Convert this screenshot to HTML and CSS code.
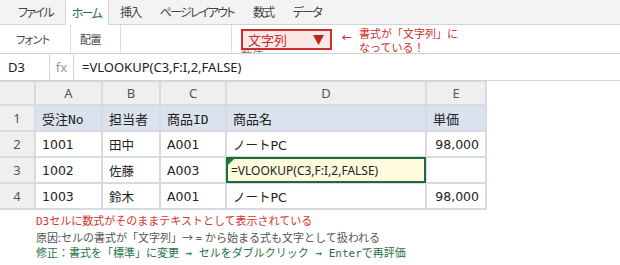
FILE: index.html
```html
<!DOCTYPE html>
<html lang="ja">
<head>
<meta charset="utf-8">
<link rel="stylesheet" href="styles.css">
</head>
<body>
<div class="tabs">
  <span class="tab">ファイル</span>
  <span class="tab active">ホーム</span>
  <span class="tab">挿入</span>
  <span class="tab">ページレイアウト</span>
  <span class="tab">数式</span>
  <span class="tab">データ</span>
</div>
<div class="ribbon">
  <div class="group g1">フォント</div>
  <div class="group g2">配置</div>
  <div class="group g3"></div>
  <div class="fmt">
    <div class="dropdown"><span>文字列</span><svg class="caret" width="11" height="10" viewBox="0 0 11 10"><polygon points="0,0 11,0 5.5,10" fill="#b8281c"/></svg></div>
    <div class="fmt-label">数値</div>
  </div>
  <div class="arrow">←</div>
  <div class="note">書式が「文字列」に<br>なっている！</div>
</div>
<div class="fbar">
  <div class="name">D3</div>
  <div class="fx">fx</div>
  <div class="formula">=VLOOKUP(C3,F:I,2,FALSE)</div>
</div>
<div class="sheet">
  <div class="ch"></div><div class="ch">A</div><div class="ch">B</div><div class="ch">C</div><div class="ch">D</div><div class="ch">E</div>
  <div class="rh">1</div><div class="hd">受注No</div><div class="hd">担当者</div><div class="hd">商品ID</div><div class="hd">商品名</div><div class="hd">単価</div>
  <div class="rh">2</div><div class="c">1001</div><div class="c">田中</div><div class="c">A001</div><div class="c">ノートPC</div><div class="c num">98,000</div>
  <div class="rh">3</div><div class="c">1002</div><div class="c">佐藤</div><div class="c">A003</div><div class="c err">=VLOOKUP(C3,F:I,2,FALSE)</div><div class="c num"></div>
  <div class="rh">4</div><div class="c">1003</div><div class="c">鈴木</div><div class="c">A001</div><div class="c">ノートPC</div><div class="c num">98,000</div>
</div>
<div class="notes">
  <div class="n1">D3セルに数式がそのままテキストとして表示されている</div>
  <div class="n2">原因:セルの書式が「文字列」→ = から始まる式も文字として扱われる</div>
  <div class="n3">修正：書式を「標準」に変更 → セルをダブルクリック → Enterで再評価</div>
</div>
</body>
</html>
```

FILE: styles.css
```css
body {
  margin: 0;
  background: #fff;
  font-family: "Noto Sans", "Noto Sans CJK JP", sans-serif;
  color: #222;
  width: 620px;
  height: 265px;
  overflow: hidden;
}

.tabs {
  display: flex;
  gap: 4px;
  height: 24px;
  padding-left: 11px;
  background: #f3f3f3;
  border-bottom: 1px solid #d2d2d2;
  font-size: 12px;
  font-feature-settings: "palt";
  letter-spacing: -1.7px;
  color: #444;
}
.tab {
  display: flex;
  align-items: center;
  padding: 0 8px 0 7px;
}
.tab.active {
  background: #fff;
  color: #1e7145;
  border-left: 1px solid #d6d6d6;
  border-right: 1px solid #d6d6d6;
  height: 25px;
  padding: 0 7px 0 6px;
}

.ribbon {
  display: flex;
  height: 28px;
  border-bottom: 1px solid #d2d2d2;
  font-size: 11px;
  color: #444;
  box-sizing: content-box;
}
.group {
  display: flex;
  align-items: center;
  border-right: 1px solid #dcdcdc;
  box-sizing: border-box;
  font-feature-settings: "palt";
  letter-spacing: -0.6px;
}
.g1 { width: 71px; padding-left: 16px; }
.g2 { width: 50px; padding-left: 9px; }
.g3 { width: 111px; }

.fmt {
  margin-left: 9px;
  width: 91px;
  height: 28px;
  overflow: hidden;
  display: flex;
  flex-direction: column;
}
.dropdown {
  flex: none;
  margin-top: 4px;
  height: 21px;
  box-sizing: border-box;
  border: 2px solid #c9302c;
  background: #fde8e8;
  color: #c9302c;
  font-size: 13px;
  display: flex;
  align-items: center;
  justify-content: space-between;
  padding: 0 6px 0 5px;
}
.caret { display: block; margin-top: 1px; }
.fmt-label {
  flex: none;
  font-size: 11px;
  line-height: 12px;
  color: #777;
  margin-top: 0;
}
.arrow {
  margin-left: 10px;
  padding-top: 5px;
  color: #c9302c;
  font-size: 12px;
  line-height: 14px;
  font-family: "DejaVu Sans", sans-serif;
}
.note {
  margin-left: 7px;
  padding-top: 1px;
  color: #c9302c;
  font-size: 11px;
  line-height: 14px;
  font-family: "Noto Sans CJK JP", sans-serif;
  white-space: nowrap;
  height: 28px;
}

.fbar {
  display: flex;
  height: 26px;
  border-bottom: 1px solid #d2d2d2;
  font-size: 13px;
  align-items: stretch;
}
.name {
  width: 50px;
  box-sizing: border-box;
  border-right: 1px solid #d6d6d6;
  padding-left: 8px;
  display: flex;
  align-items: center;
}
.fx {
  width: 24px;
  box-sizing: border-box;
  border-right: 1px solid #d6d6d6;
  color: #9a9a9a;
  display: flex;
  align-items: center;
  justify-content: center;
}
.formula {
  padding-left: 8px;
  display: flex;
  align-items: center;
}

.sheet {
  display: grid;
  width: 487px;
  box-sizing: border-box;
  grid-template-columns: 34px 65px 56px 64px 198px 58px;
  grid-template-rows: 22px repeat(4, 24px);
  gap: 2px;
  padding: 1px 2px 2px 0;
  background: #d6dbe2;
}
.sheet > div {
  display: flex;
  align-items: center;
  white-space: nowrap;
}
.ch, .rh {
  background: #efefef;
  color: #555;
  font-size: 13px;
  justify-content: center;
}
.hd {
  background: #dae2ee;
  font-family: "DejaVu Sans Mono", "Noto Sans CJK JP", monospace;
  font-size: 13px;
  padding-left: 6px;
  color: #222;
}
.c {
  background: #fff;
  font-family: "DejaVu Sans", "Noto Sans CJK JP", sans-serif;
  font-size: 12.5px;
  padding-left: 6px;
}
.c.num {
  justify-content: flex-end;
  padding-right: 6px;
}
.c.err {
  position: relative;
  background: #fffbdc;
  outline: 2px solid #1d6b3a;
  outline-offset: -1px;
  font-family: "Noto Sans", "Noto Sans CJK JP", sans-serif;
  font-size: 12px;
  padding-left: 4px;
}
.c.err::before {
  content: "";
  position: absolute;
  left: 0;
  top: 1px;
  border-top: 7px solid #1d7a3e;
  border-right: 7px solid transparent;
}

.notes {
  padding: 4px 0 0 36px;
  font-size: 11px;
  line-height: 16px;
  font-family: "DejaVu Sans Mono", "Noto Sans CJK JP", monospace;
}
.n1 { color: #d0362a; }
.n2 {
  color: #555;
  font-family: "Noto Sans", "Noto Sans CJK JP", sans-serif;
}
.n3 { color: #1e7145; }
```
